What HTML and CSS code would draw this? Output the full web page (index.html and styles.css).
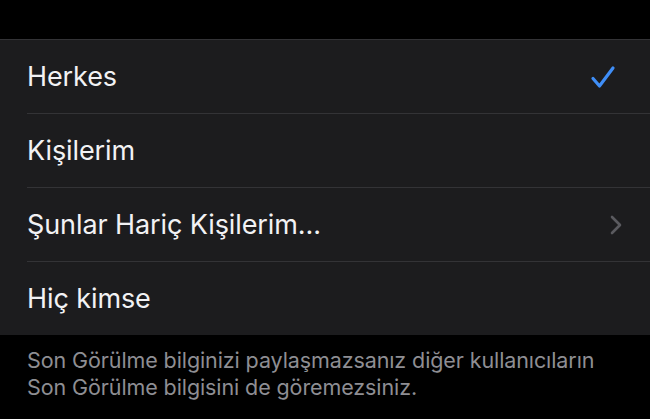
FILE: index.html
```html
<!DOCTYPE html>
<html lang="tr">
<head>
<meta charset="utf-8">
<link rel="stylesheet" href="styles.css">
</head>
<body>
<div class="screen">
  <div class="top"></div>
  <ul class="group">
    <li class="row">
      <span class="label">Herkes</span>
      <svg class="check" width="26" height="24" viewBox="0 0 26 24"><path d="M3 13.5 L9.5 21 L23 3" fill="none" stroke="#3f8ef7" stroke-width="3.2" stroke-linecap="round" stroke-linejoin="round"/></svg>
    </li>
    <li class="row"><span class="label">Kişilerim</span></li>
    <li class="row">
      <span class="label">Şunlar Hariç Kişilerim...</span>
      <svg class="chev" width="12" height="20" viewBox="0 0 12 20"><path d="M2 2 L10 10 L2 18" fill="none" stroke="#5a5a5f" stroke-width="2.6" stroke-linecap="round" stroke-linejoin="round"/></svg>
    </li>
    <li class="row"><span class="label">Hiç kimse</span></li>
  </ul>
  <p class="footer">Son Görülme bilginizi paylaşmazsanız diğer kullanıcıların<br>Son Görülme bilgisini de göremezsiniz.</p>
</div>
</body>
</html>
```
FILE: styles.css
```css
html, body {
  margin: 0;
  padding: 0;
  background: #000;
}
.screen {
  width: 650px;
  height: 419px;
  overflow: hidden;
  background: #000;
  font-family: Inter, Roboto, "Liberation Sans", sans-serif;
}
.top {
  height: 39px;
}
.group {
  list-style: none;
  margin: 0;
  padding: 0 0 0 27px;
  background: #1c1c1e;
  border-top: 1px solid #333336;
}
.row {
  height: 73px;
  display: flex;
  align-items: center;
  justify-content: space-between;
  padding-right: 28px;
  border-bottom: 1px solid #333336;
}
.row:last-child {
  border-bottom: none;
}
.label {
  color: #f2f2f4;
  font-size: 27px;
  letter-spacing: -0.1px;
}
.check {
  margin-right: 6px;
}
.footer {
  margin: 0;
  padding: 12px 27px 0;
  color: #8e8e93;
  font-size: 21.5px;
  line-height: 27px;
  letter-spacing: -0.1px;
}
```
